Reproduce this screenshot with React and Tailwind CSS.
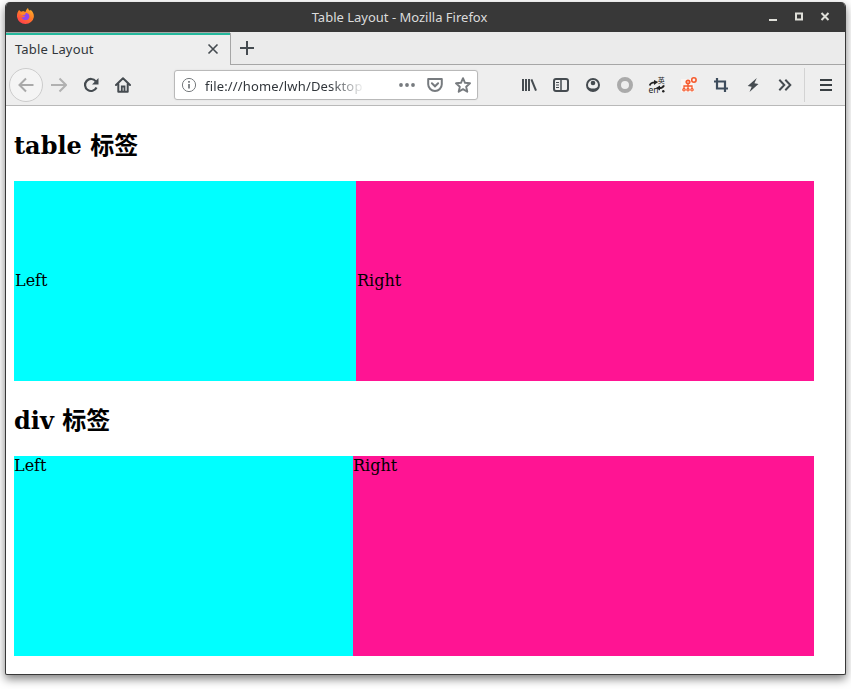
import React from "react";

function Firefox() {
  return (
    <svg width="19" height="19" viewBox="0 0 20 20">
      <defs>
        <linearGradient id="fox" x1="0.85" y1="0.05" x2="0.25" y2="1">
          <stop offset="0" stopColor="#ffb02a" />
          <stop offset="0.45" stopColor="#ff7a26" />
          <stop offset="1" stopColor="#ff3a50" />
        </linearGradient>
      </defs>
      <path fill="url(#fox)" d="M3.2 3.2 5.4 5l2.2-.7L10 5.2c.4-1.800 1.200-3.300 2.700-4.200.1 1.500 1 2.200 2.100 3l.6-1.100c2.400 2 3.600 4.500 3.400 7.500A9 8.900 0 0 1 1 10.300C.9 7.500 1.600 5.200 3.200 3.200z" />
      <path fill="#9046ee" d="M6.800 7.500c2-1.700 5.700-1.600 6.900.6 1.300 2.600-.4 5.600-3.400 5.700-2.300.1-4-1.200-4.500-3 1.800.8 3.100-.1 3.900-1.200l-2.900-.7z" />
      <path fill="#ff8a2a" d="m4 6.500 2-1.400 2 .6 2.500 1.100-1 1.300-3 .2z" />
    </svg>
  );
}

function Icon({ children, size = 16, className = "text-[#454b50]" }) {
  return (
    <svg width={size} height={size} viewBox="0 0 16 16" fill="none" stroke="currentColor" strokeWidth="2" className={"block shrink-0 " + className}>
      {children}
    </svg>
  );
}

function TitleBar() {
  return (
    <div className="flex h-[30px] shrink-0 items-center bg-[#383838] pr-[12px] pl-[10px]">
      <div className="flex w-[100px] items-center pb-[2px]"><Firefox /></div>
      <div className="flex-1 pr-[64px] text-center text-[13px] leading-[30px] text-[#dcdcdc]">Table Layout - Mozilla Firefox</div>
      <div className="flex w-[86px] items-center justify-end gap-[10px] text-[#dfdfd9]">
        <Icon className=""><path d="M4 11h8" /></Icon>
        <Icon className=""><path d="M5 4.500h6v6H5z" /></Icon>
        <Icon className=""><path d="m4.500 4 7 7m0-7-7 7" /></Icon>
      </div>
    </div>
  );
}

function TabStrip() {
  return (
    <div className="flex h-[32px] shrink-0">
      <div className="flex w-[224px] items-center justify-between border-t-2 border-[#24b89c] bg-[#eeeeee] pr-[9px] pb-[2px] pl-[9px] shadow-[0_-1px_0_#a8a8a8]">
        <span className="text-[13px] leading-[20px] tracking-[0.15px] text-[#31363b]">Table Layout</span>
        <Icon><path strokeWidth="1.600" d="m3.500 3.500 9 9m0-9-9 9" /></Icon>
      </div>
      <div className="flex flex-1 items-start border-b border-l border-[#a6a6a6] bg-[#ebebeb] pt-[7px] pl-[8px]">
        <Icon><path d="M8 1v14M1 8h14" /></Icon>
      </div>
    </div>
  );
}

function AddressBar() {
  return (
    <div className="ml-[43px] flex h-[30px] w-[304px] shrink-0 items-center rounded-[3px] border border-[#b9b9b9] bg-white px-[6px] shadow-[0_0_2px_#dddddd]">
      <Icon className="text-[#777b7e]">
        <circle cx="8" cy="8" r="6.600" strokeWidth="1" />
        <path strokeWidth="1.800" d="M8 7v4.500M8 4v1.700" />
      </Icon>
      <span className="ml-[8px] w-[158px] whitespace-nowrap pt-[2px] text-[13px] leading-[22px] tracking-[0.16px] text-[#31363b] [mask-image:linear-gradient(to_right,black_125px,transparent_160px)]">file:///home/lwh/Desktop</span>
      <div className="ml-auto flex gap-[12px] text-[#777b7f]">
        <Icon className=""><g fill="currentColor" stroke="none"><circle cx="2" cy="8" r="1.900" /><circle cx="8" cy="8" r="1.900" /><circle cx="14" cy="8" r="1.900" /></g></Icon>
        <Icon className=""><path strokeLinejoin="round" d="M1.200 2h13.600v5.200a6.800 6.700 0 0 1-13.600 0z" /><path strokeLinecap="round" d="m4.900 6.300 3.100 3 3.100-3" /></Icon>
        <Icon className=""><path strokeWidth="1.900" strokeLinejoin="round" d="m8 1.200 2 4.600 5 .5-3.800 3.400 1.100 5L8 12.100l-4.300 2.600 1.100-5L1 6.300l5-.5z" /></Icon>
      </div>
    </div>
  );
}

function Extensions() {
  return (
    <div className="ml-[43px] flex shrink-0 gap-[16px]">
      <Icon><path d="M2 2v12M5 2v12M8 2v12" strokeWidth="2" /><path d="m10.400 2.300 4.600 11.400" strokeWidth="2" /></Icon>
      <Icon><rect x="1" y="2" width="14" height="12" rx="2" /><path d="M8 2v12" strokeWidth="1.500" /><path d="M3 5.500h3M3 8h3M3 10.500h3" strokeWidth="1" /></Icon>
      <Icon><circle cx="8" cy="8" r="6" /><g fill="currentColor" stroke="none"><circle cx="8" cy="6" r="2.300" /><path d="M2.500 10.300c1.600-.3 2.500 1.300 5.500 1.300s3.900-1.600 5.500-1.300L12 13l-4 1.500L4 13z" /></g></Icon>
      <Icon className="text-[#aaaaaa]"><circle cx="8" cy="8" r="6" strokeWidth="4" /></Icon>
      <Icon className="overflow-visible text-[#222222]">
        <path d="M.7 8.500C1.300 6.400 3.500 5.400 6 5.400M15 8.300c-.8 1.900-2.600 2.800-5 2.800" strokeWidth="1.900" />
        <path fill="currentColor" stroke="none" d="m5 3 4.200 2L5 8zM11 8.400 6.800 11l4.200 2.500z" />
        <text x="-.5" y="15.800" fontSize="8.500" fill="currentColor" stroke="none">en</text>
        <text x="8.800" y="6.300" fontSize="7" fill="currentColor" stroke="none">英</text>
        <circle cx="14.300" cy="14.200" r="1.200" fill="currentColor" stroke="none" />
      </Icon>
      <Icon className="overflow-visible text-[#f65a2c]">
        <rect x="0" y="2" width="13" height="13" fill="#faf5f2" stroke="none" />
        <circle cx="12.900" cy="3" r="2.200" strokeWidth="1.600" />
        <circle cx="7" cy="5" r="1.700" strokeWidth="1.800" />
        <path strokeWidth="1.300" d="M7 6.500v6M3 12V9h8v3M3 9h8" />
        <g strokeWidth="1.200"><circle cx="3" cy="12.800" r="1.200" /><circle cx="7" cy="12.800" r="1.200" /><circle cx="11" cy="12.800" r="1.200" /></g>
      </Icon>
      <Icon className="text-[#3d4c5c]"><path strokeWidth="2.200" d="M4 1v10.500h11M1 4.500h11V15" /></Icon>
      <Icon><path fill="currentColor" stroke="none" d="M11.800 1 2.700 9.100l4 .6L4.500 15l9-8.100-4.100-.6z" /></Icon>
      <Icon><path d="m2.300 2.800 5 5.200-5 5.200M8.300 2.800l5 5.200-5 5.200" /></Icon>
    </div>
  );
}

function Toolbar() {
  return (
    <div className="flex h-[41px] shrink-0 items-center border-b border-[#b9b9b9] bg-[#eeeeee] pl-[3px]">
      <div className="flex size-[34px] shrink-0 items-center justify-center rounded-full border border-[#cccccc] bg-[#f4f4f4]">
        <Icon className="text-[#a9a9a9]"><path d="M15.500 8H1.500M8 1.500 1.500 8 8 14.500" /></Icon>
      </div>
      <div className="ml-[8px] flex gap-[16px]">
        <Icon className="text-[#b1b1b1]"><path d="M0 8h15M8.500 1.500 15 8l-6.500 6.500" /></Icon>
        <Icon><path strokeWidth="2.200" d="M12.800 4.300A6 6 0 1 0 13.500 10.500" /><path fill="currentColor" stroke="none" d="M15.500 1v6.500H9z" /></Icon>
        <Icon><path strokeLinejoin="round" strokeLinecap="round" d="M1 8 8 1.300 15 8M3.300 7v7.700h9.400V7" /><path strokeWidth="1.800" d="M6.800 14V9.500h2.700V14" /></Icon>
      </div>
      <AddressBar />
      <Extensions />
      <div className="ml-[11px] h-[34px] w-px bg-[#d3d3d3]" />
      <Icon className="ml-[13px] text-[#393f43]"><path strokeWidth="1.800" d="M2 3h12M2 8h12M2 13h12" /></Icon>
    </div>
  );
}

function Heading({ children }) {
  return <h2 className="h-[35px] text-[24px] leading-[35px] font-bold">{children}</h2>;
}

export default function App() {
  return (
    <div className="h-[689px] w-[851px] overflow-hidden bg-white pt-[2px] pl-[5px] font-['Noto_Sans','Noto_Sans_CJK_SC',sans-serif]">
      <div className="flex h-[673px] w-[841px] flex-col overflow-hidden rounded-t-[5px] rounded-b-[2px] border-x border-b border-[#383838] bg-white shadow-[0_4px_10px_rgba(0,0,0,0.5)]">
        <TitleBar />
        <div className="h-px shrink-0 bg-[#ebebeb]" />
        <TabStrip />
        <Toolbar />
        <main className="flex-1 pl-[8px] font-['DejaVu_Serif','Noto_Sans_CJK_SC',serif] text-[16px] leading-[19px] text-black">
          <div className="pt-[22px]"><Heading>table 标签</Heading></div>
          <div className="mt-[18px] flex h-[200px] w-[800px] items-stretch">
            <div className="flex w-[342px] items-center bg-[#00ffff] pb-[2px] pl-px">Left</div>
            <div className="flex flex-1 items-center bg-[#ff1493] pb-[2px] pl-px">Right</div>
          </div>
          <div className="pt-[22px]"><Heading>div 标签</Heading></div>
          <div className="mt-[18px] flex h-[200px] w-[800px]">
            <div className="w-[339px] bg-[#00ffff]">Left</div>
            <div className="flex-1 bg-[#ff1493]">Right</div>
          </div>
        </main>
      </div>
    </div>
  );
}
